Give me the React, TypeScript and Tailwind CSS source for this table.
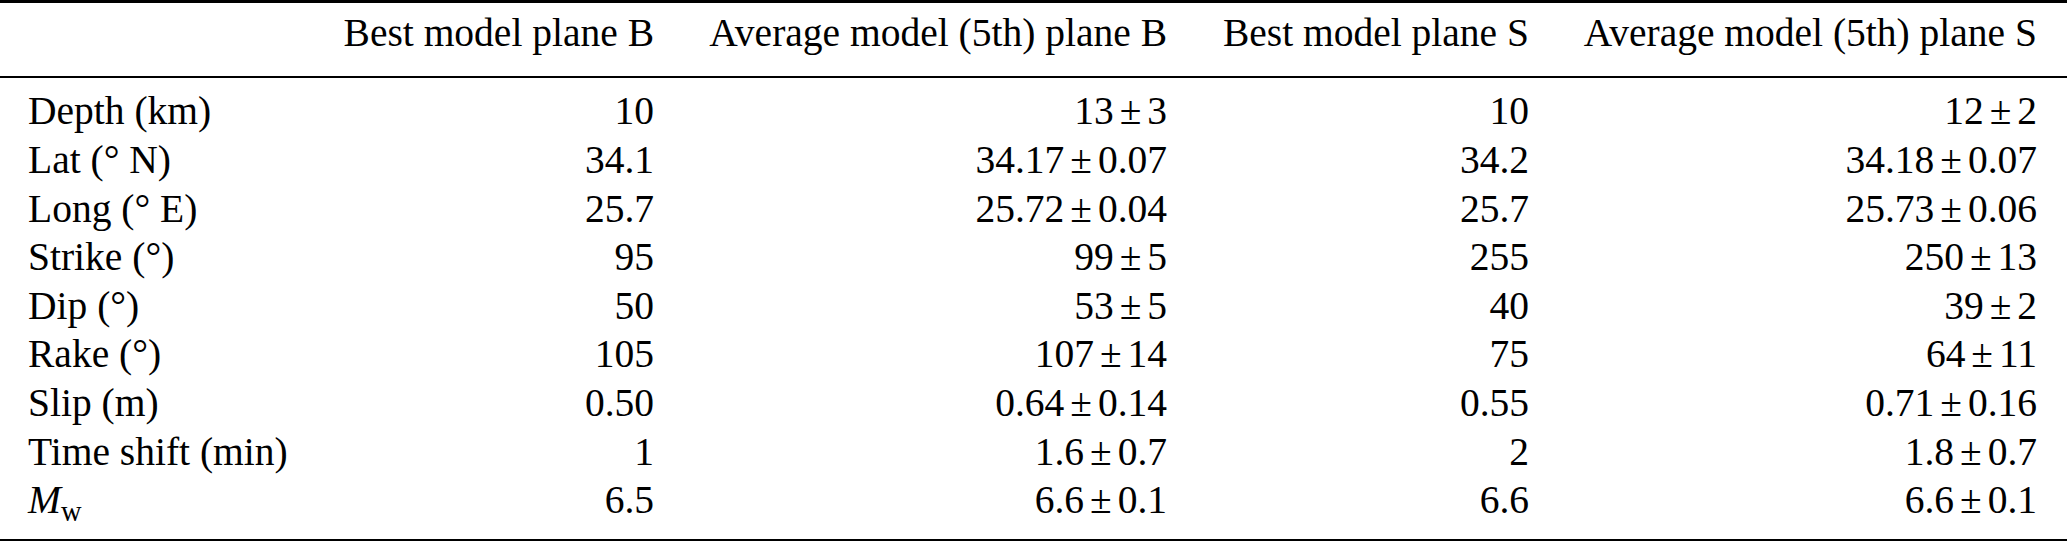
const cols = "grid grid-cols-[330px_324px_513px_362px_508px]";

const headers = [
  "Best model plane B",
  "Average model (5th) plane B",
  "Best model plane S",
  "Average model (5th) plane S",
];

type Cell = string | [string, string];

const rows: { label: React.ReactNode; cells: Cell[] }[] = [
  { label: "Depth (km)", cells: ["10", ["13", "3"], "10", ["12", "2"]] },
  { label: "Lat (° N)", cells: ["34.1", ["34.17", "0.07"], "34.2", ["34.18", "0.07"]] },
  { label: "Long (° E)", cells: ["25.7", ["25.72", "0.04"], "25.7", ["25.73", "0.06"]] },
  { label: "Strike (°)", cells: ["95", ["99", "5"], "255", ["250", "13"]] },
  { label: "Dip (°)", cells: ["50", ["53", "5"], "40", ["39", "2"]] },
  { label: "Rake (°)", cells: ["105", ["107", "14"], "75", ["64", "11"]] },
  { label: "Slip (m)", cells: ["0.50", ["0.64", "0.14"], "0.55", ["0.71", "0.16"]] },
  { label: "Time shift (min)", cells: ["1", ["1.6", "0.7"], "2", ["1.8", "0.7"]] },
  {
    label: (
      <>
        <span className="italic">M</span>
        <span className="relative top-[0.28em] text-[0.72em] leading-none">w</span>
      </>
    ),
    cells: ["6.5", ["6.6", "0.1"], "6.6", ["6.6", "0.1"]],
  },
];

function Value({ v }: { v: Cell }) {
  if (typeof v === "string") return <>{v}</>;
  return (
    <>
      {v[0]}
      <span className="mx-[0.15em]">±</span>
      {v[1]}
    </>
  );
}

export default function App() {
  return (
    <div className="w-[2067px] h-[543px] overflow-hidden bg-white text-black font-['Liberation_Serif','Times_New_Roman',serif] text-[39.5px]">
      <div className="border-t-[3px] border-black" />
      <div className={`${cols} pr-[30px] pt-[8.8px] pb-[20.5px] leading-[43.7px]`}>
        <div />
        {headers.map((h) => (
          <div key={h} className="text-right whitespace-nowrap">
            {h}
          </div>
        ))}
      </div>
      <div className="border-t-2 border-black" />
      <div className="pt-[9.4px] pb-[14.2px]">
        {rows.map((r, ri) => (
          <div key={ri} className={`${cols} pr-[30px] h-[48.6px] leading-[48.6px]`}>
            <div className="pl-[28px] whitespace-nowrap">{r.label}</div>
            {r.cells.map((c, i) => (
              <div key={i} className="text-right whitespace-nowrap">
                <Value v={c} />
              </div>
            ))}
          </div>
        ))}
      </div>
      <div className="border-t-[2.5px] border-black" />
    </div>
  );
}
